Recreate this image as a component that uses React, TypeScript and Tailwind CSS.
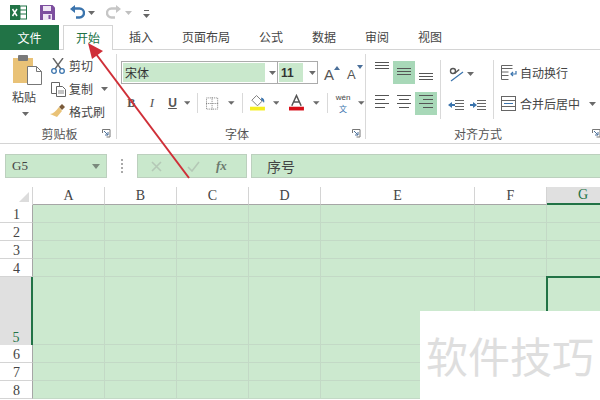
import React from "react";

const FONT = "font-['Noto_Sans_CJK_SC','Liberation_Sans',sans-serif]";
const SIM = "font-['Liberation_Serif','DejaVu_Serif',serif]";

function Caret({ className = "" }: { className?: string }) {
  return (
    <svg width="7" height="4" viewBox="0 0 7 4" className={className}>
      <path d="M0 0h7L3.5 4z" fill="#6a6a6a" />
    </svg>
  );
}

function Lines({ y, xs }: { y: number[]; xs: [number, number][] }) {
  return (
    <svg width="22" height="23" viewBox="0 0 22 23">
      {y.map((v, i) => (
        <path key={i} d={`M${xs[i][0]} ${v + 0.5}H${xs[i][1]}`} stroke="#555" strokeWidth="1" />
      ))}
    </svg>
  );
}

function Divider() {
  return <div className="w-px self-stretch bg-[#d9d9d9] my-[10px] mb-[4px]" />;
}

function Launcher() {
  return (
    <svg width="9" height="9" viewBox="0 0 9 9">
      <path d="M.5 4V.5H8V8H4.5" fill="none" stroke="#777" />
      <path d="M2 2l4 4M6 3v3H3" fill="none" stroke="#4a6f99" />
    </svg>
  );
}

function TitleBar() {
  return (
    <div className="h-[25px] flex items-center pl-[10px]">
      <svg width="17" height="15" viewBox="0 0 17 15">
        <rect x="6" y="1" width="10.5" height="13" fill="#fff" stroke="#217346" />
        <path d="M10 1v13M6 5h10M6 9h10" stroke="#217346" />
        <rect x="0" y="0" width="10" height="15" fill="#217346" />
        <path d="M2.5 4l4.5 7M7 4l-4.5 7" stroke="#fff" strokeWidth="1.5" />
      </svg>
      <svg width="15" height="15" viewBox="0 0 15 15" className="ml-[13px]">
        <path d="M0 0h12.5L15 2.5V15H0z" fill="#7d4f9f" />
        <rect x="3" y="1" width="8" height="5" fill="#efe6f4" />
        <rect x="3" y="9" width="9" height="6" fill="#efe6f4" />
        <rect x="8.5" y="10" width="2" height="4" fill="#7d4f9f" />
      </svg>
      <svg width="16" height="15" viewBox="0 0 16 15" className="ml-[14px]">
        <path d="M3 3.5h7.5a4 4 0 0 1 0 9H7" fill="none" stroke="#3b74ad" strokeWidth="2.4" />
        <path d="M6 0L1 4l5 4z" fill="#3b74ad" />
      </svg>
      <Caret className="ml-[3px]" />
      <svg width="16" height="15" viewBox="0 0 16 15" className="ml-[11px]">
        <path d="M13 3.5H5.5a4 4 0 0 0 0 9H9" fill="none" stroke="#c6c6c6" strokeWidth="2.4" />
        <path d="M10 0l5 4-5 4z" fill="#c6c6c6" />
      </svg>
      <svg width="7" height="4" viewBox="0 0 7 4" className="ml-[3px]">
        <path d="M0 0h7L3.5 4z" fill="#c0c0c0" />
      </svg>
      <svg width="7" height="8" viewBox="0 0 7 8" className="ml-[11px] mt-[2px]">
        <path d="M1 .5h5" stroke="#666" />
        <path d="M0 4h7L3.5 8z" fill="#666" />
      </svg>
    </div>
  );
}

function Tabs() {
  return (
    <div className="h-[25px] flex border-b border-[#d4d4d4] text-[12px] text-[#444]">
      <div className="w-[59px] h-[25px] bg-[#217346] text-white flex items-center justify-center">文件</div>
      <div className="ml-[4px] w-[50px] h-[25px] bg-white border border-b-0 border-[#d4d4d4] text-[#217346] flex items-center justify-center">
        开始
      </div>
      <div className="flex gap-[29px] ml-[16px] items-center h-[24px]">
        {["插入", "页面布局", "公式", "数据", "审阅", "视图"].map((t) => (
          <span key={t}>{t}</span>
        ))}
      </div>
    </div>
  );
}

function SmallAction({ icon, label, caret }: { icon: React.ReactNode; label: string; caret?: boolean }) {
  return (
    <div className="flex items-center h-[23px] whitespace-nowrap">
      <div className="w-[18px] flex justify-center">{icon}</div>
      <span className="ml-[2px] text-[12px] text-[#444]">{label}</span>
      {caret && <Caret className="ml-[8px]" />}
    </div>
  );
}

function Clipboard() {
  return (
    <div className="w-[116px] shrink-0 flex flex-col relative">
      <div className="flex h-[73px] shrink-0 pt-[5px]">
        <div className="w-[46px] pl-[13px] flex flex-col shrink-0">
          <svg width="29" height="30" viewBox="0 0 29 30">
            <rect x="0" y="3" width="20" height="25" fill="#e9c277" />
            <rect x="5" y="0" width="10" height="6" rx="1" fill="#7a7a7a" />
            <path d="M14.500 11.500h9l5 5v13h-14z" fill="#fff" stroke="#777" />
            <path d="M23.500 11.500v5h5" fill="none" stroke="#777" />
          </svg>
          <span className="text-[12px] text-[#444] leading-[14px] mt-[5px] -ml-[1px] whitespace-nowrap">粘贴</span>
          <Caret className="ml-[9px] mt-[8px]" />
        </div>
        <div className="flex flex-col ml-[3px]">
          <SmallAction
            label="剪切"
            icon={
              <svg width="14" height="16" viewBox="0 0 14 16">
                <path d="M2 0l8 11M12 0L4 11" stroke="#666" strokeWidth="1.4" />
                <circle cx="3" cy="13" r="2.300" fill="none" stroke="#3b74ad" strokeWidth="1.300" />
                <circle cx="11" cy="13" r="2.300" fill="none" stroke="#3b74ad" strokeWidth="1.300" />
              </svg>
            }
          />
          <SmallAction
            label="复制"
            caret
            icon={
              <svg width="15" height="15" viewBox="0 0 15 15">
                <path d="M.5.5h8v11h-8z" fill="#fff" stroke="#666" />
                <path d="M5.500 4.500h6l3 3v7h-9z" fill="#fff" stroke="#666" />
                <path d="M7 9h6M7 11h6" stroke="#888" />
              </svg>
            }
          />
          <SmallAction
            label="格式刷"
            icon={
              <svg width="16" height="15" viewBox="0 0 16 15">
                <path d="M9 3l3-3 3 3-3 3z" fill="#7a5a3a" />
                <path d="M9 3l3 4-5 6-7-3c3 0 6-3 9-7z" fill="#e9c277" />
              </svg>
            }
          />
        </div>
      </div>
      <div className="flex-1 min-h-0 flex items-start justify-center text-[12px] text-[#555] pl-[3px] pt-[2px] leading-[17px]">剪贴板</div>
      <div className="absolute right-[5px] bottom-[1px]">
        <Launcher />
      </div>
    </div>
  );
}

function Font() {
  return (
    <div className="w-[248px] shrink-0 flex flex-col relative pl-[4px]">
      <div className="flex items-start pt-[11px] h-[43px] shrink-0">
        <div className="w-[157px] shrink-0 h-[23px] border border-[#ababab] flex items-center p-[1px]">
          <div className="w-[142px] h-[19px] bg-[#c9e8cc] text-[12px] text-[#333] flex items-center pl-[2px]">宋体</div>
          <Caret className="ml-[4px]" />
        </div>
        <div className="w-[40px] shrink-0 h-[23px] border border-l-0 border-[#ababab] flex items-center p-[1px]">
          <div className="w-[25px] h-[19px] bg-[#c9e8cc] text-[12px] text-[#333] font-bold flex items-center pl-[2px] font-['Liberation_Sans',sans-serif]">11</div>
          <Caret className="ml-[6px]" />
        </div>
        <div className="ml-[6px] w-[23px] h-[23px] text-[15px] text-[#555] flex items-end font-['Liberation_Sans',sans-serif]">
          <span className="leading-[18px]">A</span>
          <svg width="6" height="4" viewBox="0 0 6 4" className="mb-[14px]"><path d="M0 4h6L3 0z" fill="#4a6f99" /></svg>
        </div>
        <div className="w-[18px] h-[23px] text-[13px] text-[#555] flex items-end font-['Liberation_Sans',sans-serif]">
          <span className="leading-[18px]">A</span>
          <svg width="6" height="4" viewBox="0 0 6 4" className="mb-[15px] ml-[1px]"><path d="M0 0h6L3 4z" fill="#4a6f99" /></svg>
        </div>
      </div>
      <div className="flex items-center h-[30px] shrink-0 pb-[10px] font-['Liberation_Sans',sans-serif] text-[#555]">
        <span className="w-[20px] ml-[1px] text-center font-bold text-[12px] font-['Liberation_Serif',serif]">B</span>
        <span className="w-[22px] ml-[1px] text-center italic text-[13px] font-['Liberation_Serif',serif]">I</span>
        <span className="w-[22px] text-center underline text-[12px] font-bold">U</span>
        <Caret className="ml-[1px]" />
        <div className="w-px h-[20px] bg-[#d9d9d9] ml-[7px]" />
        <svg width="14" height="13" viewBox="0 0 14 13" className="ml-[8px]">
          <rect x=".5" y=".5" width="12" height="12" fill="none" stroke="#777" strokeDasharray="1 1" />
          <path d="M6.500 0v13M0 6.500h13" stroke="#777" strokeDasharray="1 1" />
        </svg>
        <Caret className="ml-[9px]" />
        <div className="w-px h-[20px] bg-[#d9d9d9] ml-[7px]" />
        <svg width="17" height="18" viewBox="0 0 17 18" className="ml-[7px]">
          <path d="M7 1l6 6-5 5-6-6z" fill="#fff" stroke="#777" />
          <path d="M12 3c3 1 4 3 3 6-1-2-2-3-3-3z" fill="#3b74ad" />
          <rect x="0" y="13" width="16" height="4" fill="#f5ee1f" />
        </svg>
        <Caret className="ml-[7px]" />
        <svg width="16" height="18" viewBox="0 0 16 18" className="ml-[10px]">
          <path d="M3 12L8 1l5 11M5 8h6" fill="none" stroke="#555" strokeWidth="1.600" />
          <rect x="0" y="13" width="16" height="4" fill="#d7101a" />
        </svg>
        <Caret className="ml-[9px]" />
        <div className="w-px h-[20px] bg-[#d9d9d9] ml-[7px]" />
        <div className="w-[16px] ml-[8px] flex flex-col items-center gap-[3px]">
          <span className="text-[8px] leading-[8px] text-[#444]">wén</span>
          <span className={`text-[8px] leading-[8px] text-[#3b74ad] ${FONT}`}>文</span>
        </div>
        <Caret className="ml-[8px]" />
      </div>
      <div className="flex-1 min-h-0 pl-[104px] pt-[2px] text-[12px] text-[#555] leading-[17px]">字体</div>
      <div className="absolute right-[4px] bottom-[1px]">
        <Launcher />
      </div>
    </div>
  );
}

function Alignment() {
  const w: [number, number] = [4, 18];
  return (
    <div className="w-[234px] shrink-0 flex flex-col relative">
      <div className="flex h-[73px] shrink-0">
        <div className="grid grid-cols-[22px_22px_22px] pl-[5px] pt-[11px] auto-rows-[31px] w-[74px] shrink-0">
          <Lines y={[1, 4, 7]} xs={[w, w, w]} />
          <div className="bg-[#a8d8b8] h-[23px]"><Lines y={[7, 10, 13]} xs={[w, w, w]} /></div>
          <Lines y={[12, 15, 18]} xs={[w, w, w]} />
          <Lines y={[3, 7, 11, 15]} xs={[w, [4, 14], w, [4, 14]]} />
          <Lines y={[3, 7, 11, 15]} xs={[w, [6, 16], w, [6, 16]]} />
          <div className="bg-[#a8d8b8] h-[23px]"><Lines y={[3, 7, 11, 15]} xs={[w, [8, 18], w, [8, 18]]} /></div>
        </div>
        <Divider />
        <div className="w-[52px] shrink-0 flex flex-col pl-[7px] pt-[12px]">
          <div className="flex items-center h-[23px]">
            <svg width="16" height="16" viewBox="0 0 16 16">
              <circle cx="5" cy="5" r="2.500" fill="none" stroke="#555" strokeWidth="1.400" />
              <path d="M8 8l2-6" stroke="#555" strokeWidth="1.400" transform="rotate(30 8 5)" />
              <path d="M3 15L15 6" stroke="#3b74ad" strokeWidth="1.200" />
            </svg>
            <Caret className="ml-[3px]" />
          </div>
          <div className="flex items-center h-[23px] mt-[8px] gap-[6px]">
            <svg width="16" height="12" viewBox="0 0 16 12">
              <path d="M7 1.500h9M7 4.500h9M7 7.500h9M7 10.500h9" stroke="#666" />
              <path d="M0 6l4-3v2h3v2H4v2z" fill="#3b74ad" />
            </svg>
            <svg width="16" height="12" viewBox="0 0 16 12">
              <path d="M7 1.500h9M7 4.500h9M7 7.500h9M7 10.500h9" stroke="#666" />
              <path d="M7 6L3 3v2H0v2h3v2z" fill="#3b74ad" />
            </svg>
          </div>
        </div>
        <Divider />
        <div className="pl-[7px] pt-[11px] flex flex-col text-[12px] text-[#444] whitespace-nowrap">
          <div className="flex items-center h-[23px]">
            <svg width="16" height="15" viewBox="0 0 16 15">
              <path d="M.5.5h11M.5 3.500h11M.5 7h7M.5 10.500h7M.5.500v14h7" fill="none" stroke="#666" />
              <path d="M15 6v3h-5M12 7l-2 2 2 2" fill="none" stroke="#3b74ad" strokeWidth="1.200" />
            </svg>
            <span className="ml-[3px]">自动换行</span>
          </div>
          <div className="flex items-center h-[23px] mt-[8px]">
            <svg width="15" height="15" viewBox="0 0 15 15">
              <rect x=".5" y=".5" width="14" height="14" fill="none" stroke="#666" />
              <path d="M0 4.500h15M0 10.500h15" stroke="#666" />
              <path d="M3 7.500h9" stroke="#3b74ad" />
            </svg>
            <span className="ml-[4px]">合并后居中</span>
            <Caret className="ml-[9px]" />
          </div>
        </div>
      </div>
      <div className="flex-1 min-h-0 text-[12px] text-[#555] pl-[88px] pt-[2px] leading-[17px]">对齐方式</div>
      <div className="absolute right-[-1px] bottom-[1px]">
        <Launcher />
      </div>
    </div>
  );
}

function Ribbon() {
  return (
    <div className="h-[94px] flex border-b border-[#d4d4d4] pb-[4px] overflow-hidden">
      <Clipboard />
      <div className="w-px shrink-0 bg-[#d9d9d9] mt-[4px]" />
      <Font />
      <div className="w-px shrink-0 bg-[#d9d9d9] mt-[4px]" />
      <Alignment />
    </div>
  );
}

function FormulaBar() {
  const box = "h-[24px] bg-[#c9e8cc] border border-[#bcd0be]";
  return (
    <div className="h-[43px] flex items-start pt-[10px] pl-[5px]">
      <div className={`${box} w-[102px] flex items-center justify-between pl-[6px] pr-[6px]`}>
        <span className={`${SIM} text-[13px] text-[#444]`}>G5</span>
        <svg width="8" height="5" viewBox="0 0 8 5"><path d="M0 0h8L4 5z" fill="#7a8a7c" /></svg>
      </div>
      <div className="w-[30px] h-[24px] flex flex-col items-center justify-center gap-[2px]">
        <span className="w-[2px] h-[2px] bg-[#aaa]" />
        <span className="w-[2px] h-[2px] bg-[#aaa]" />
        <span className="w-[2px] h-[2px] bg-[#aaa]" />
        <span className="w-[2px] h-[2px] bg-[#aaa]" />
      </div>
      <div className={`${box} w-[110px] flex items-center pl-[13px]`}>
        <svg width="11" height="11" viewBox="0 0 11 11"><path d="M1 1l9 9M10 1l-9 9" stroke="#b4c8b6" strokeWidth="1.600" /></svg>
        <svg width="13" height="11" viewBox="0 0 13 11" className="ml-[25px]"><path d="M1 6l4 4 7-9" fill="none" stroke="#b4c8b6" strokeWidth="1.600" /></svg>
        <span className="ml-[16px] text-[13px] italic font-bold text-[#6c7a6e] font-['Liberation_Serif',serif]">fx</span>
      </div>
      <div className={`${box} ml-[4px] flex-1 border-r-0 flex items-center pl-[15px] text-[14px] text-[#444]`}>序号</div>
    </div>
  );
}

const COLS: [string, number][] = [
  ["A", 72],
  ["B", 72],
  ["C", 72],
  ["D", 72],
  ["E", 154],
  ["F", 72],
  ["G", 72],
];
const ROWS: [string, number][] = [
  ["1", 18],
  ["2", 18],
  ["3", 18],
  ["4", 18],
  ["5", 68],
  ["6", 18],
  ["7", 18],
  ["8", 18],
];

function Sheet() {
  return (
    <div className={`flex flex-col ${SIM} text-[14px] text-[#444]`}>
      <div className="flex h-[18px]">
        <div className="w-[33px] shrink-0 border-r border-[#d4d4d4] flex items-end justify-end pr-[3px] pb-[3px]">
          <svg width="10" height="10" viewBox="0 0 10 10"><path d="M10 0v10H0z" fill="#dcdcdc" /></svg>
        </div>
        {COLS.map(([c, w]) => (
          <div
            key={c}
            style={{ width: w }}
            className={
              c === "G"
                ? "shrink-0 bg-[#e0e0e0] border-b-2 border-[#217346] text-[#217346] flex items-end justify-center leading-[16px]"
                : "shrink-0 border-r border-b border-b-[#a6a6a6] border-r-[#d4d4d4] flex items-end justify-center leading-[16px]"
            }
          >
            {c}
          </div>
        ))}
      </div>
      {ROWS.map(([r, h]) => (
        <div key={r} className="flex" style={{ height: h }}>
          <div
            className={
              r === "5"
                ? "w-[33px] shrink-0 bg-[#e0e0e0] border-r-2 border-[#217346] text-[#217346] flex items-end justify-center pl-[1px] leading-[14px]"
                : "w-[33px] shrink-0 border-r border-b border-r-[#a6a6a6] border-b-[#d4d4d4] flex items-end justify-center pl-[1px] leading-[14px]"
            }
          >
            {r}
          </div>
          {COLS.map(([c, w]) => (
            <div
              key={c}
              style={{ width: w }}
              className={
                c === "G" && r === "5"
                  ? "shrink-0 bg-[#cce9cf] border-l-2 border-t-2 border-[#217346] -ml-px -mt-px"
                  : "shrink-0 bg-[#cce9cf] border-r border-b border-[#c3d9c6]"
              }
            />
          ))}
        </div>
      ))}
    </div>
  );
}

export default function App() {
  return (
    <div className={`w-[600px] h-[400px] bg-white overflow-hidden relative ${FONT}`}>
      <TitleBar />
      <Tabs />
      <Ribbon />
      <FormulaBar />
      <Sheet />
      <div className="absolute left-[420px] top-[311px] w-[180px] h-[89px] bg-white flex items-center justify-center pb-[2px] text-[42px] leading-none text-[#dedede] whitespace-nowrap">
        软件技巧
      </div>
      <svg width="600" height="400" viewBox="0 0 600 400" className="absolute left-0 top-0 pointer-events-none">
        <path d="M189 178L96 54" stroke="#cf2f38" strokeWidth="2" />
        <path d="M88 43l15 8-11 8z" fill="#cf2f38" />
      </svg>
    </div>
  );
}
